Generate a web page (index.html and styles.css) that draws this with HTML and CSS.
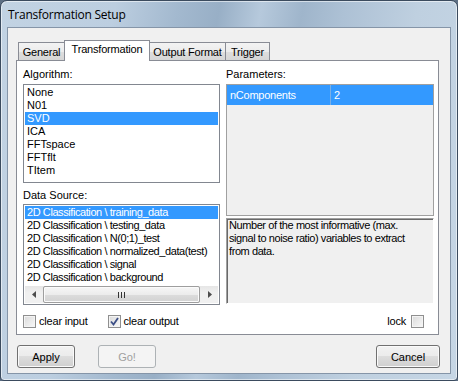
FILE: index.html
```html
<!DOCTYPE html>
<html>
<head>
<meta charset="utf-8">
<link rel="stylesheet" href="styles.css">
</head>
<body>
<div class="window">
  <div class="titlebar"><span class="title">Transformation Setup</span></div>
  <div class="client">
    <div class="tabs">
      <div class="tab t-general">General</div>
      <div class="tab t-sel">Transformation</div>
      <div class="tab t-output">Output Format</div>
      <div class="tab t-trigger">Trigger</div>
    </div>
    <div class="panel">
      <div class="cols">
        <div class="col">
          <div class="lbl">Algorithm:</div>
          <div class="listbox algo">
            <div class="item">None</div>
            <div class="item">N01</div>
            <div class="item sel">SVD</div>
            <div class="item">ICA</div>
            <div class="item">FFTspace</div>
            <div class="item">FFTflt</div>
            <div class="item">TItem</div>
          </div>
          <div class="lbl lbl-ds">Data Source:</div>
          <div class="listbox data">
            <div class="item sel">2D Classification \ training_data</div>
            <div class="item">2D Classification \ testing_data</div>
            <div class="item">2D Classification \ N(0;1)_test</div>
            <div class="item">2D Classification \ normalized_data(test)</div>
            <div class="item">2D Classification \ signal</div>
            <div class="item">2D Classification \ background</div>
            <div class="hscroll">
              <div class="sb-btn"><svg width="4" height="7" viewBox="0 0 4 7"><path d="M4 0 L0 3.5 L4 7 Z" fill="#4d4d4d"/></svg></div>
              <div class="sb-track"><div class="sb-thumb"><span class="grip"></span><span class="grip"></span><span class="grip"></span></div></div>
              <div class="sb-btn"><svg width="4" height="7" viewBox="0 0 4 7"><path d="M0 0 L4 3.5 L0 7 Z" fill="#4d4d4d"/></svg></div>
            </div>
          </div>
        </div>
        <div class="col">
          <div class="lbl">Parameters:</div>
          <div class="pgrid">
            <div class="prow">
              <div class="pcell pname">nComponents</div>
              <div class="pcell pval">2</div>
            </div>
          </div>
          <div class="desc">Number of the most informative (max.<br>signal to noise ratio) variables to extract<br>from data.</div>
        </div>
      </div>
      <div class="checks">
        <label class="chk"><span class="box"></span>clear input</label>
        <label class="chk chk-out"><span class="box"><svg width="9" height="9" viewBox="0 0 9 9"><path d="M1 4.5 L3.5 7.5 L8 1" fill="none" stroke="#3c4f86" stroke-width="1.8"/></svg></span>clear output</label>
        <label class="chk chk-lock">lock<span class="box"></span></label>
      </div>
    </div>
    <div class="buttons">
      <div class="btn">Apply</div>
      <div class="btn btn-dis">Go!</div>
      <div class="btn btn-cancel">Cancel</div>
    </div>
  </div>
</div>
</body>
</html>
```

FILE: styles.css
```css
html, body {
  margin: 0;
  padding: 0;
}
body {
  width: 458px;
  height: 381px;
  overflow: hidden;
  background: #5d6f84;
  font-family: "Liberation Sans", Arial, sans-serif;
  font-size: 11px;
  color: #000;
}
.window {
  box-sizing: border-box;
  width: 458px;
  height: 381px;
  border: 1px solid #3b4b5e;
  border-radius: 7px 7px 4px 4px;
  background: linear-gradient(100deg, #c2d3e3 0%, #bccee0 22%, #a3b9cf 34%, #98afc6 42%, #b6c9dc 50%, #9fb5cb 58%, #adc1d5 66%, #bfd0e0 80%, #c6d6e5 100%);
  box-shadow: inset 0 0 0 1px rgba(255,255,255,0.55);
  display: flex;
  flex-direction: column;
}
.titlebar {
  height: 26px;
  display: flex;
  align-items: center;
  padding-left: 7px;
  font-family: "Open Sans", "Liberation Sans", sans-serif;
  font-size: 12px;
  letter-spacing: -0.25px;
}
.client {
  flex: 1;
  margin: 0 6px 6px 6px;
  background: #f0f0f0;
  border: 1px solid #8595a8;
  padding: 12px 0 0 8px;
}
.tabs {
  display: flex;
  align-items: flex-end;
  height: 21px;
  padding-left: 2px;
  margin-bottom: -1px;
  position: relative;
  z-index: 1;
}
.tab {
  box-sizing: border-box;
  height: 18px;
  margin-bottom: 1px;
  border: 1px solid #898c95;
  border-bottom: none;
  background: linear-gradient(#f3f3f3 0%, #ececec 50%, #dedede 50%, #d6d6d6 100%);
  text-align: center;
  line-height: 18px;
  letter-spacing: -0.2px;
}
.t-general { width: 47px; }
.t-sel {
  width: 86px;
  height: 21px;
  margin-bottom: 0;
  background: #fff;
  line-height: 17px;
  margin-left: -1px;
}
.t-output { width: 77px; margin-left: -1px; }
.t-trigger { width: 45px; margin-left: -1px; }
.panel {
  box-sizing: border-box;
  width: 423px;
  height: 275px;
  border: 1px solid #898c95;
  background: #fff;
  padding: 7px 4px 0 6px;
}
.cols {
  display: grid;
  grid-template-columns: 197px 208px;
  column-gap: 6px;
}
.col {
  display: flex;
  flex-direction: column;
}
.lbl {
  line-height: 13px;
  height: 13px;
  margin-bottom: 3px;
}
.lbl-ds {
  margin-top: 6px;
  margin-bottom: 2px;
}
.listbox {
  box-sizing: border-box;
  border: 1px solid #828790;
  padding: 1px;
  background: #fff;
  display: flex;
  flex-direction: column;
}
.algo { height: 99px; }
.data { height: 101px; }
.item {
  height: 13px;
  line-height: 13px;
  padding-left: 2px;
  white-space: nowrap;
  overflow: hidden;
}
.data .item {
  letter-spacing: -0.42px;
}
.item.sel {
  background: #3399ff;
  color: #fff;
}
.hscroll {
  margin-top: auto;
  height: 17px;
  display: flex;
  background: linear-gradient(#e6e6e6, #f0f0f0 40%, #f0f0f0);
}
.sb-btn {
  width: 17px;
  display: flex;
  align-items: center;
  justify-content: center;
}
.sb-track {
  flex: 1;
  display: flex;
  align-items: stretch;
}
.sb-thumb {
  box-sizing: border-box;
  width: 157px;
  margin-left: 1px;
  border: 1px solid #9e9e9e;
  border-radius: 2px;
  background: linear-gradient(#f6f6f6 0%, #ececec 50%, #dcdcdc 51%, #d2d2d2 100%);
  box-shadow: inset 0 0 0 1px #fbfbfb;
  display: flex;
  align-items: center;
  justify-content: center;
  gap: 1px;
}
.grip {
  width: 1px;
  height: 6px;
  background: #333;
  margin: 0 0.5px;
}
.pgrid {
  box-sizing: border-box;
  height: 132px;
  border: 1px solid #a0a0a0;
  background: #f0f0f0;
  margin-bottom: 2px;
}
.prow {
  display: flex;
  height: 20px;
  background: #3399ff;
  color: #fff;
}
.pcell {
  line-height: 20px;
  letter-spacing: -0.25px;
}
.pname {
  width: 104px;
  padding-left: 3px;
  box-sizing: border-box;
  border-right: 1px solid #7ab0e6;
}
.pval {
  padding-left: 3px;
}
.desc {
  box-sizing: border-box;
  height: 86px;
  background: #f0f0f0;
  border-top: 1px solid #a0a0a0;
  border-left: 1px solid #a0a0a0;
  border-right: 1px solid #fff;
  border-bottom: 1px solid #fff;
  box-shadow: inset 1px 1px 0 #696969;
  padding: 0 2px 0 2px;
  line-height: 13px;
  letter-spacing: -0.42px;
}
.checks {
  display: flex;
  align-items: center;
  margin-top: 10px;
  height: 13px;
  padding-right: 10px;
}
.chk {
  display: flex;
  align-items: center;
  gap: 3px;
  line-height: 13px;
  letter-spacing: -0.2px;
}
.chk-out {
  margin-left: 20px;
}
.chk-lock {
  margin-left: auto;
  gap: 5px;
}
.box {
  box-sizing: border-box;
  width: 13px;
  height: 13px;
  border: 1px solid #8f8f8f;
  background: linear-gradient(135deg, #dadada, #f8f8f8);
  box-shadow: inset 0 0 0 1px #f4f4f4;
  display: flex;
  align-items: center;
  justify-content: center;
}
.buttons {
  display: flex;
  margin-top: 10px;
  padding-left: 1px;
}
.btn {
  box-sizing: border-box;
  width: 58px;
  height: 23px;
  border: 1px solid #707070;
  border-radius: 3px;
  background: linear-gradient(#f2f2f2 0%, #ebebeb 50%, #dddddd 50%, #cfcfcf 100%);
  box-shadow: inset 0 0 0 1px #fafafa;
  display: flex;
  align-items: center;
  justify-content: center;
}
.btn-dis {
  margin-left: 23px;
  border-color: #adb2b5;
  background: #f4f4f4;
  box-shadow: none;
  color: #a0a0a0;
}
.btn-cancel {
  width: 64px;
  margin-left: auto;
  margin-right: 10px;
}
```
